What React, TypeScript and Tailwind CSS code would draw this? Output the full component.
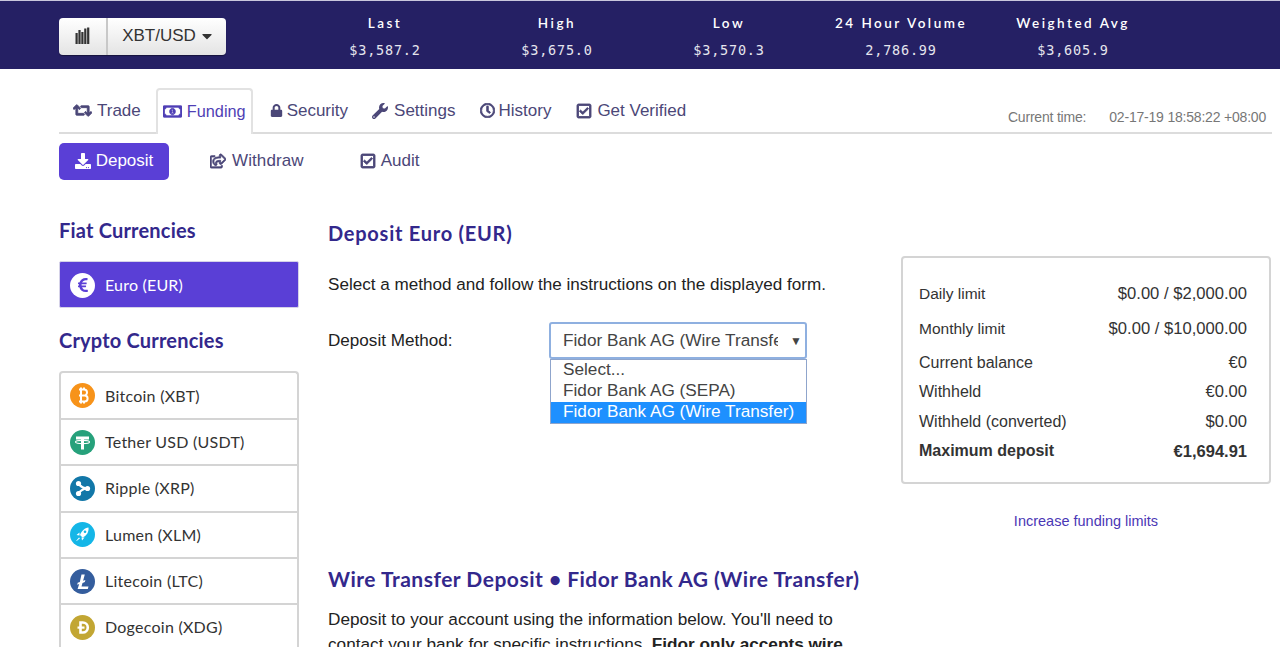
import React from "react";
import { FaRetweet, FaRegMoneyBillAlt, FaLock, FaWrench, FaRegClock, FaRegCheckSquare, FaDownload, FaRegShareSquare, FaCaretDown, FaEuroSign } from "react-icons/fa";

const stats = [
  ["Last", "$3,587.2"],
  ["High", "$3,675.0"],
  ["Low", "$3,570.3"],
  ["24 Hour Volume", "2,786.99"],
  ["Weighted Avg", "$3,605.9"],
];

function Coin({ bg, children }: { bg: string; children: React.ReactNode }) {
  return (
    <svg width="25" height="25" viewBox="0 0 25 25" className="shrink-0">
      <circle cx="12.5" cy="12.5" r="12.5" fill={bg} />
      {children}
    </svg>
  );
}

const coins: [string, React.ReactNode][] = [
  ["Bitcoin (XBT)", (
    <Coin bg="#f7931a">
      <path d="M9 6.500h5a3 3 0 0 1 0 6H9m0 0h5.600a3 3 0 0 1 0 6H9m2-12v12m0-14v2m3-2v2m-3 12v2m3-2v2" fill="none" stroke="#fff" strokeWidth="2" />
    </Coin>
  )],
  ["Tether USD (USDT)", (
    <Coin bg="#26a17b">
      <path d="M6 6.500h13v3h-5v10h-3v-10H6z" fill="#fff" />
      <ellipse cx="12.500" cy="12" rx="7" ry="1.600" fill="none" stroke="#fff" strokeWidth="1.200" />
    </Coin>
  )],
  ["Ripple (XRP)", (
    <Coin bg="#1277a8">
      <path d="M8.500 7.500Q12 12.500 17.500 12.500Q12 12.500 8.500 17.500" fill="none" stroke="#fff" strokeWidth="2.200" />
      <circle cx="17.500" cy="12.500" r="2.600" fill="#fff" />
      <circle cx="8.500" cy="7.500" r="2.600" fill="#fff" />
      <circle cx="8.500" cy="17.500" r="2.600" fill="#fff" />
    </Coin>
  )],
  ["Lumen (XLM)", (
    <Coin bg="#14b6e7">
      <path d="M18.500 5.500c-4 .5-7 3.500-8.500 7.500l2.500 2.500c4-1.500 6.500-5.500 6-10z" fill="#fff" />
      <path d="M9.500 10.500 6.500 13l3 .5zM14.500 15.500 12 18.500l-.500-3zM9 15.500l-3 3.500 1-.2 3-2.500z" fill="#fff" />
      <circle cx="15" cy="9.800" r="1.300" fill="#14b6e7" />
    </Coin>
  )],
  ["Litecoin (LTC)", (
    <Coin bg="#345d9d">
      <path d="M11.500 5.500h3.300l-1.700 6.300 2.300-.9-.6 2.100-2.300.9-1 3.600h7l-.7 2.500H7.600l1.600-5.100-2 .8.500-1.900 2.100-.8z" fill="#fff" />
    </Coin>
  )],
  ["Dogecoin (XDG)", (
    <Coin bg="#c2a633">
      <path d="M10.500 7.500h2.300a5 5 0 0 1 0 10h-2.300z" fill="none" stroke="#fff" strokeWidth="2.600" />
      <rect x="7.500" y="11.500" width="7" height="2.200" fill="#fff" />
    </Coin>
  )],
];

const heavy = { stroke: "currentColor", strokeWidth: 28 };

const navItems: [React.ReactNode, string, string][] = [
  [<FaRetweet className="text-[19px]" {...heavy} />, "Trade", "gap-[5px] mr-[15px]"],
  [<FaRegMoneyBillAlt className="text-[19px]" {...heavy} />, "Funding", "gap-[5px] mr-[17px]"],
  [<FaLock className="text-[13px]" />, "Security", "gap-[4px] mr-[24px]"],
  [<FaWrench className="text-[16px]" />, "Settings", "gap-[6px] mr-[25px]"],
  [<FaRegClock className="text-[15px]" {...heavy} />, "History", "gap-[3px] mr-[25px]"],
  [<FaRegCheckSquare className="text-[16px]" {...heavy} />, "Get Verified", "gap-[5px]"],
];

const limits1 = [
  ["Daily limit", "$0.00 / $2,000.00"],
  ["Monthly limit", "$0.00 / $10,000.00"],
];
const limits2 = [
  ["Current balance", "€0"],
  ["Withheld", "€0.00"],
  ["Withheld (converted)", "$0.00"],
];

export default function App() {
  return (
    <div className="h-[647px] overflow-hidden bg-white text-[#222] font-['Liberation_Sans',Arial,sans-serif]">
      {/* Top bar */}
      <header className="h-[69px] bg-[#252064] border-t border-[#c9c7dd] flex items-center pl-[59px]">
        <div className="flex h-[37px] w-[167px] mt-[4px] -translate-y-[1px] rounded-[4px] bg-gradient-to-b from-white to-[#e4e4e4] shadow-[0_1px_1px_rgba(0,0,0,0.4)] text-[#333]">
          <div className="w-[49px] flex items-center justify-center border-r-2 border-[#c8c8c8]">
            <svg width="15" height="18" viewBox="0 0 15 18" fill="#333">
              <rect x="0.500" y="6" width="2.200" height="11" />
              <rect x="3.400" y="3" width="2.200" height="14" />
              <rect x="6.300" y="5" width="2.200" height="12" />
              <rect x="9.200" y="1.500" width="2.200" height="15.500" />
              <rect x="12.100" y="0.500" width="2.200" height="16.500" />
            </svg>
          </div>
          <div className="flex-1 flex items-center justify-center gap-[3px] pl-[3px] text-[17px]">
            XBT/USD
            <FaCaretDown className="text-[16px]" />
          </div>
        </div>
        <div className="ml-[73px] mt-[2px] flex text-white">
          {stats.map(([label, value]) => (
            <div key={label} className="w-[172px] flex flex-col items-center">
              <div className="font-['Lato',sans-serif] font-semibold text-[13.500px] leading-[20px] tracking-[2.500px] whitespace-nowrap">{label}</div>
              <div className="mt-[7px] font-['DejaVu_Sans_Mono',monospace] text-[13.500px] leading-[20px] tracking-[0.800px] text-[#e6e6ee]">{value}</div>
            </div>
          ))}
        </div>
      </header>

      {/* Tabs */}
      <nav className="mt-[19px] ml-[59px] mr-[8px] h-[46px] border-b-2 border-[#dcdcdc] flex items-start justify-between">
        <div className="flex h-[46px] pl-[14px] text-[17px] text-[#4b4778]">
          {navItems.map(([icon, label, cls]) => {
            return label === "Funding" ? (
              <div key={label} className={"flex items-center h-[46px] px-[5px] text-[#4f3fb5] text-[16.300px] bg-white border-2 border-b-0 border-[#e2e2e2] rounded-t-[4px] pb-[1px] " + cls}>
                {icon}
                <span>{label}</span>
              </div>
            ) : (
              <div key={label} className={"flex items-center pb-[1px] " + cls}>
                {icon}
                <span>{label}</span>
              </div>
            );
          })}
        </div>
        <div className="flex self-end text-[14px] text-[#777] pb-[4px] pr-[6px] tracking-[-0.200px]">
          <span className="mr-[23px]">Current time:</span>
          <span>02-17-19 18:58:22 +08:00</span>
        </div>
      </nav>

      {/* Sub tabs */}
      <div className="ml-[59px] mt-[9px] h-[37px] flex items-center text-[17px] text-[#4b4778]">
        <div className="w-[110px] h-[37px] rounded-[5px] bg-[#5a3fd6] text-white flex items-center justify-center gap-[5px] pb-[2px]">
          <FaDownload className="text-[16px]" />
          <span>Deposit</span>
        </div>
        <div className="ml-[41px] flex items-center gap-[6px] pb-[2px]">
          <FaRegShareSquare className="text-[16px]" {...heavy} />
          <span className="tracking-[0.100px]">Withdraw</span>
        </div>
        <div className="ml-[56px] flex items-center gap-[5px] pb-[2px]">
          <FaRegCheckSquare className="text-[16px]" {...heavy} />
          <span>Audit</span>
        </div>
      </div>

      {/* Content */}
      <div className="flex ml-[59px] mt-[36px]">
        <aside className="w-[240px] shrink-0">
          <h3 className="font-['Lato',sans-serif] font-bold text-[20px] leading-[28px] tracking-[0.200px] text-[#33288c]">Fiat Currencies</h3>
          <div className="mt-[17px] h-[47px] flex items-center gap-[10px] pl-[10px] pt-[1px] bg-[#5a3fd6] border border-[#d5d2e8] rounded-[2px] text-white font-['Lato',sans-serif] text-[16px] tracking-[0.200px]">
            <span className="w-[25px] h-[25px] rounded-full bg-white flex items-center justify-center text-[#5a3fd6]">
              <FaEuroSign className="text-[16px]" />
            </span>
            Euro (EUR)
          </div>
          <h3 className="mt-[18px] font-['Lato',sans-serif] font-bold text-[20px] leading-[28px] tracking-[0.200px] text-[#33288c]">Crypto Currencies</h3>
          <div className="mt-[17px] border-2 border-b-0 border-[#d4d4d4] rounded-t-[4px] font-['Lato',sans-serif] text-[16px] tracking-[0.250px] text-[#333]">
            {coins.map(([name, icon], i) => (
              <div key={name} className={i === 0 ? "h-[45px] flex items-center gap-[10px] pl-[9px]" : "h-[46.300px] border-t-2 border-[#d4d4d4] flex items-center gap-[10px] pl-[9px]"}>
                {icon}
                {name}
              </div>
            ))}
          </div>
        </aside>

        <main className="ml-[29px] w-[573px] shrink-0">
          <h3 className="mt-[3px] font-['Lato',sans-serif] font-bold text-[20px] leading-[28px] tracking-[0.750px] text-[#33288c]">Deposit Euro (EUR)</h3>
          <p className="mt-[26px] text-[17.100px] leading-[24px]">Select a method and follow the instructions on the displayed form.</p>
          <div className="mt-[25px] flex items-center">
            <label className="w-[221px] text-[17.100px] leading-[24px]">Deposit Method:</label>
            <div className="relative w-[258px] h-[37px]">
              <div className="h-[37px] border-2 border-[#8fb0e0] rounded-[3px] flex items-center pl-[12px] text-[17.200px] text-[#444] whitespace-nowrap">
                <span className="w-[215px] overflow-hidden">Fidor Bank AG (Wire Transfer)</span>
                <span className="ml-[12px] text-[12px]">▼</span>
              </div>
              <ul className="absolute left-[1px] top-[37px] w-[257px] h-[65px] bg-white border border-[#8fa5cc] text-[17.200px] leading-[19px] text-[#444]">
                <li className="h-[21px] pl-[12px]">Select...</li>
                <li className="h-[21px] pl-[12px]">Fidor Bank AG (SEPA)</li>
                <li className="h-[21px] pl-[12px] bg-[#1e90ff] text-white">Fidor Bank AG (Wire Transfer)</li>
              </ul>
            </div>
          </div>
          <h3 className="mt-[206px] font-['Lato',sans-serif] font-bold text-[21px] leading-[28px] tracking-[0.500px] text-[#33288c]">Wire Transfer Deposit • Fidor Bank AG (Wire Transfer)</h3>
          <p className="mt-[14px] w-[530px] text-[17.200px] leading-[25px]">
            Deposit to your account using the information below. You'll need to contact your bank for specific instructions. <b>Fidor only accepts wire</b>
          </p>
        </main>

        <section className="w-[370px] shrink-0 mt-[40px]">
          <div className="h-[228px] border-2 border-[#d4d4d4] rounded-[4px] pl-[16px] pr-[22px] pt-[24px] text-[16px] text-[#333]">
            {limits1.map(([a, b]) => (
              <div key={a} className="flex justify-between h-[34.500px] leading-[24px]">
                <span className="text-[15.500px]">{a}</span>
                <span className="text-[16.600px]">{b}</span>
              </div>
            ))}
            {limits2.map(([a, b]) => (
              <div key={a} className="flex justify-between h-[29.300px] leading-[24px]">
                <span>{a}</span>
                <span className="text-[16.600px]">{b}</span>
              </div>
            ))}
            <div className="flex justify-between leading-[24px] font-bold">
              <span>Maximum deposit</span>
              <span className="text-[16.500px]">€1,694.91</span>
            </div>
          </div>
          <div className="mt-[27px] text-center text-[14.500px] leading-[20px] text-[#4a37b5]">Increase funding limits</div>
        </section>
      </div>
    </div>
  );
}
